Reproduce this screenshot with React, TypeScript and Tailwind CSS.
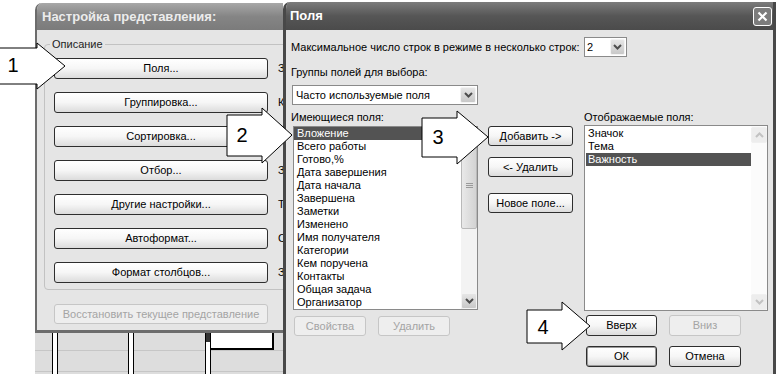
import React from "react";

const available = [
  "Вложение",
  "Всего работы",
  "Готово,%",
  "Дата завершения",
  "Дата начала",
  "Завершена",
  "Заметки",
  "Изменено",
  "Имя получателя",
  "Категории",
  "Кем поручена",
  "Контакты",
  "Общая задача",
  "Организатор",
];

const shown = ["Значок", "Тема", "Важность"];

const viewRows: [string, string][] = [
  ["Поля...", "Значок, Тема, Важность"],
  ["Группировка...", "Категории"],
  ["Сортировка...", "Срок (по возрастанию)"],
  ["Отбор...", "Задан"],
  ["Другие настройки...", "Типы шрифтов и другие параметры"],
  ["Автоформат...", "Собственные правила"],
  ["Формат столбцов...", "Задание формата столбцов"],
];

function Chevron({ up, light }: { up?: boolean; light?: boolean }) {
  return (
    <svg width="9" height="6" viewBox="0 0 9 6">
      <path
        d={up ? "M1 5 L4.5 1.5 L8 5" : "M1 1 L4.5 4.5 L8 1"}
        fill="none"
        stroke={light ? "#c2c2c2" : "#4d4d4d"}
        strokeWidth="2"
      />
    </svg>
  );
}

function ArrowBox({ up, light, className = "" }: { up?: boolean; light?: boolean; className?: string }) {
  const look = light
    ? "border-[#f0f0f0] bg-[#ededed]"
    : "border-[#f3f3f3] bg-gradient-to-b from-[#e6e6e6] to-[#c8c8c8]";
  return (
    <div className={`flex shrink-0 items-center justify-center rounded-[2px] border ${look} ${className}`}>
      <Chevron up={up} light={light} />
    </div>
  );
}

function Btn({
  children,
  className = "",
  disabled = false,
  isDefault = false,
}: {
  children: React.ReactNode;
  className?: string;
  disabled?: boolean;
  isDefault?: boolean;
}) {
  const look = disabled
    ? "border-[#c6c6c6] bg-[#eeeeee] text-[#a4a4a4]"
    : "border-[#2e2e2e] bg-gradient-to-b from-white via-[#f6f6f6] to-[#dcdcdc] text-black";
  const def = isDefault ? "shadow-[inset_0_0_0_1px_#9a9a9a]" : "";
  return (
    <div
      className={`flex shrink-0 items-center justify-center whitespace-nowrap rounded-[3px] border text-[11px] leading-[13px] ${look} ${def} ${className}`}
    >
      {children}
    </div>
  );
}

function TableStrip() {
  return (
    <div className="flex h-[41px] bg-[#dddddd] bg-[linear-gradient(to_bottom,transparent_17px,#c6c6c6_17px,#c6c6c6_18px,transparent_18px,transparent_38px,#c6c6c6_38px,#c6c6c6_39px,transparent_39px)]">
      <div className="w-[17px]" />
      <div className="w-[6px] border-x border-black bg-white" />
      <div className="w-[70px]" />
      <div className="w-[6px] border-x border-black bg-white" />
      <div className="w-[71px]" />
      <div className="flex w-[6px] flex-col border-x border-black">
        <div className="h-[9px] bg-[#333333]" />
        <div className="flex-1 bg-white" />
      </div>
      <div className="h-[17px] w-[63px] border-b-2 border-r-2 border-black bg-white" />
    </div>
  );
}

function ViewDialog() {
  return (
    <div className="flex w-[248px] shrink-0 flex-col pt-[3px]">
      <div className="flex h-[330px] flex-col overflow-hidden rounded-tl-[7px] border-b-[3px] border-l-[2px] border-[#6c6c6c] bg-[#e5e5e5]">
        <div className="flex h-[27px] shrink-0 items-center bg-gradient-to-b from-[#a8a8a8] via-[#858585] to-[#7b7b7b] pl-[5px] text-[13px] font-bold text-[#ececec]">
          Настройка представления:
        </div>
        <div className="flex flex-col pl-[7px]">
          <fieldset className="mt-[8px] h-[252px] w-[270px] shrink-0 rounded-[4px] border border-[#c2c2c2] p-0">
            <legend className="ml-[5px] px-[2px] text-[11px] leading-[13px] text-[#1e1e1e]">Описание</legend>
            <div className="flex flex-col gap-[13px] pl-[9px] pt-[7px]">
              {viewRows.map(([b, d]) => (
                <div key={b} className="flex items-center gap-[10px]">
                  <Btn className="h-[21px] w-[214px]">{b}</Btn>
                  <span className="whitespace-nowrap text-[11px]">{d}</span>
                </div>
              ))}
            </div>
          </fieldset>
          <Btn disabled className="ml-[10px] mt-[14px] h-[20px] w-[214px]">
            Восстановить текущее представление
          </Btn>
        </div>
      </div>
      <TableStrip />
    </div>
  );
}

function FieldsDialog() {
  return (
    <div className="flex w-[493px] shrink-0 flex-col pt-[2px]">
      <div className="flex flex-1 flex-col overflow-hidden rounded-tl-[7px] border-x-[3px] border-[#484848] bg-[#e5e5e5]">
        <div className="flex h-[28px] shrink-0 items-center justify-between bg-gradient-to-b from-[#7c7c7c] via-[#565656] to-[#4b4b4b] pl-[4px] pr-[1px]">
          <span className="text-[13px] font-bold text-white">Поля</span>
          <div className="flex h-[19px] w-[19px] items-center justify-center rounded-[3px] border border-white bg-[#7d7d7d]">
            <svg width="11" height="11" viewBox="0 0 11 11">
              <path d="M1.5 1.5 L9.5 9.5 M9.5 1.5 L1.5 9.5" stroke="white" strokeWidth="2.2" />
            </svg>
          </div>
        </div>

        <div className="flex flex-col pl-[5px] text-[11px] text-black">
          <div className="mt-[7px] flex h-[20px] items-center">
            <span className="w-[293px] shrink-0 whitespace-nowrap">
              Максимальное число строк в режиме в несколько строк:
            </span>
            <div className="flex h-[20px] w-[43px] items-center justify-between border border-[#8a8a8a] bg-white pl-[2px] pr-[1px]">
              <span>2</span>
              <ArrowBox className="h-[16px] w-[15px]" />
            </div>
          </div>

          <div className="mt-[8px] h-[14px] leading-[14px]">Группы полей для выбора:</div>

          <div className="ml-[1px] mt-[6px] flex h-[20px] w-[186px] items-center justify-between border border-[#8a8a8a] bg-white pl-[3px] pr-[1px]">
            <span>Часто используемые поля</span>
            <ArrowBox className="h-[16px] w-[16px]" />
          </div>

          <div className="mt-[5px] flex">
            {/* available fields */}
            <div className="flex w-[187px] shrink-0 flex-col">
              <div className="h-[14px] leading-[14px]">Имеющиеся поля:</div>
              <div className="ml-[2px] mt-[2px] flex h-[184px] w-[185px] border border-[#8a8a8a] bg-white">
                <div className="flex flex-1 flex-col">
                  {available.map((f, i) => (
                    <div
                      key={f}
                      className={`h-[13px] whitespace-nowrap pl-[3px] leading-[13px] ${i === 0 ? "bg-[#535353] text-white" : ""}`}
                    >
                      {f}
                    </div>
                  ))}
                </div>
                <div className="flex w-[16px] flex-col bg-[#f3f3f3]">
                  <ArrowBox up className="h-[16px] w-[16px]" />
                  <div className="flex h-[86px] items-center justify-center rounded-[2px] border border-[#b9b9b9] bg-gradient-to-r from-[#e9e9e9] to-[#d3d3d3]">
                    <svg width="7" height="6" viewBox="0 0 7 6">
                      <path d="M0 0.5 H7 M0 2.5 H7 M0 4.5 H7" stroke="#9a9a9a" strokeWidth="1" />
                    </svg>
                  </div>
                  <div className="flex-1" />
                  <ArrowBox className="h-[16px] w-[16px]" />
                </div>
              </div>
              <div className="ml-[3px] mt-[6px] flex gap-[12px]">
                <Btn disabled className="h-[20px] w-[72px]">Свойства</Btn>
                <Btn disabled className="h-[20px] w-[72px]">Удалить</Btn>
              </div>
            </div>

            {/* move buttons */}
            <div className="ml-[10px] flex w-[85px] shrink-0 flex-col pt-[16px]">
              <Btn className="h-[20px] w-[85px]">Добавить -&gt;</Btn>
              <Btn className="mt-[11px] h-[20px] w-[85px]">&lt;- Удалить</Btn>
              <Btn className="mt-[16px] h-[20px] w-[85px]">Новое поле...</Btn>
            </div>

            {/* shown fields */}
            <div className="ml-[11px] flex w-[184px] shrink-0 flex-col">
              <div className="h-[14px] leading-[14px]">Отображаемые поля:</div>
              <div className="mt-[1px] flex h-[186px] w-[184px] border border-[#8a8a8a] bg-white">
                <div className="flex flex-1 flex-col pt-[1px]">
                  {shown.map((f, i) => (
                    <div
                      key={f}
                      className={`ml-[1px] h-[13px] whitespace-nowrap pl-[2px] leading-[13px] ${i === 2 ? "bg-[#535353] text-white" : ""}`}
                    >
                      {f}
                    </div>
                  ))}
                </div>
                <div className="flex w-[16px] flex-col bg-[#fbfbfb] pt-[1px]">
                  <ArrowBox up light className="h-[16px] w-[16px]" />
                  <div className="flex-1" />
                  <ArrowBox light className="h-[16px] w-[16px]" />
                </div>
              </div>
              <div className="ml-[2px] mt-[4px] flex gap-[12px]">
                <Btn className="h-[21px] w-[71px]">Вверх</Btn>
                <Btn disabled className="h-[21px] w-[72px]">Вниз</Btn>
              </div>
              <div className="ml-[2px] mt-[10px] flex gap-[12px]">
                <Btn isDefault className="h-[21px] w-[71px]">ОК</Btn>
                <Btn className="h-[21px] w-[72px]">Отмена</Btn>
              </div>
            </div>
          </div>
        </div>
      </div>
    </div>
  );
}

function Callouts() {
  const shapes: { pts: string; n: string; x: number; y: number }[] = [
    { pts: "-2,48 37,48 37,43 65,66 37,89 37,84 -2,84", n: "1", x: 13, y: 72 },
    { pts: "227,115 262,115 262,108 292,135 262,163 262,156 227,156", n: "2", x: 242, y: 142 },
    { pts: "422,118 457,118 457,111 488,137 457,164 457,157 422,157", n: "3", x: 438, y: 144 },
    { pts: "527,310 562,310 562,302 590,326 562,350 562,343 527,343", n: "4", x: 543, y: 334 },
  ];
  return (
    <svg className="pointer-events-none absolute inset-0" width="776" height="374" viewBox="0 0 776 374">
      {shapes.map((s) => (
        <g key={s.n}>
          <polygon points={s.pts} fill="white" stroke="black" strokeWidth="1" strokeLinejoin="miter" />
          <text
            x={s.x}
            y={s.y}
            textAnchor="middle"
            fontFamily="'Liberation Sans', Arial, sans-serif"
            fontSize="20"
            fill="black"
          >
            {s.n}
          </text>
        </g>
      ))}
    </svg>
  );
}

export default function App() {
  return (
    <div className="relative flex h-[374px] w-[776px] overflow-hidden bg-white font-['Liberation_Sans',Arial,sans-serif] text-[11px] text-black">
      <div className="w-[35px] shrink-0" />
      <ViewDialog />
      <FieldsDialog />
      <Callouts />
    </div>
  );
}
